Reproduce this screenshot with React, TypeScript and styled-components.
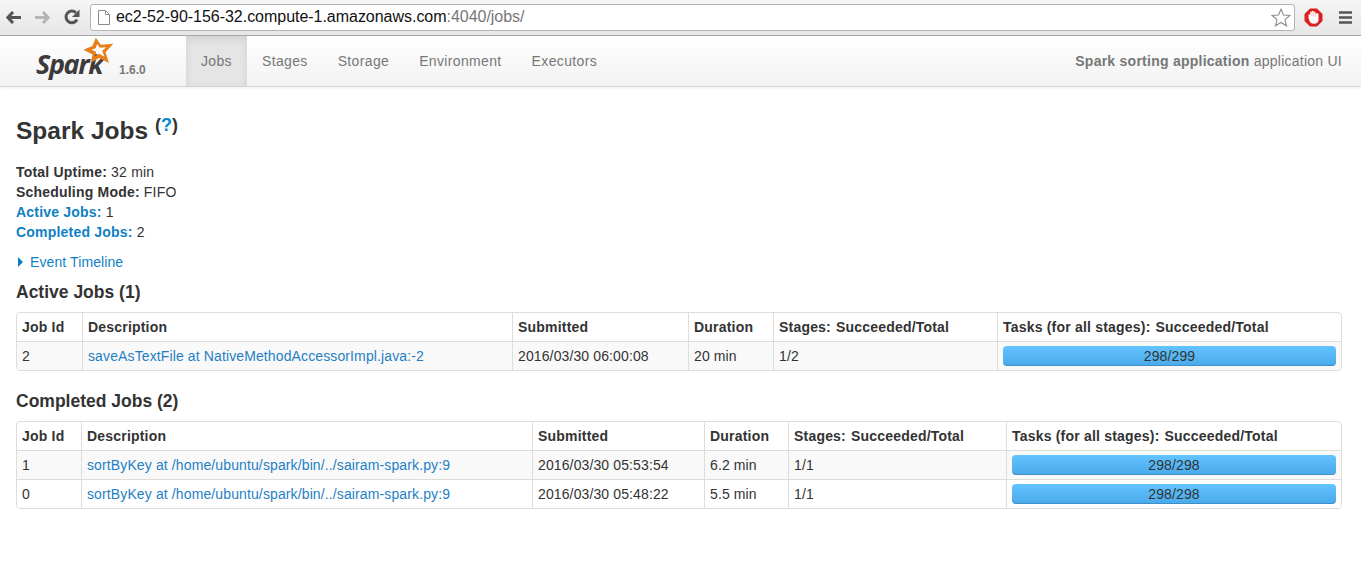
import React from "react";
import styled, { createGlobalStyle } from "styled-components";

const Global = createGlobalStyle`
  html, body { margin: 0; padding: 0; background: #fff; }
  body { font-family: "Liberation Sans", Arial, sans-serif; font-size: 14px; line-height: 20px; color: #333; overflow: hidden; }
  * { box-sizing: border-box; }
`;

const Page = styled.div`
  width: 1361px;
  height: 573px;
  display: flex;
  flex-direction: column;
`;

const BrowserBar = styled.div`
  height: 36px;
  flex: none;
  display: flex;
  align-items: center;
  background: linear-gradient(#f6f6f6, #e6e6e6);
  border-bottom: 1px solid #a9a9a9;
  padding: 0 6px 1px 6px;
`;

const NavIcon = styled.svg`
  flex: none;
  display: block;
`;

const ButtonSlot = styled.span<{ $w: number }>`
  width: ${(p) => p.$w}px;
  flex: none;
  display: flex;
`;

const Omnibox = styled.div`
  width: 1205px;
  height: 27px;
  flex: none;
  display: flex;
  align-items: center;
  background: #fff;
  border: 1px solid #b4b4b4;
  border-radius: 3px;
  padding: 0 0 0 7px;
  font-size: 16px;
  letter-spacing: -0.03px;
  color: #777;
  white-space: nowrap;
`;

const Host = styled.span`
  color: #111;
`;

const UrlText = styled.span`
  margin-left: 6px;
  flex: 1;
`;

const StarSlot = styled.span`
  margin-right: 3px;
  display: flex;
`;

const AdBlockSlot = styled.span`
  margin-left: 9px;
  display: flex;
`;

const MenuSlot = styled.span`
  margin-left: 16px;
  display: flex;
`;

const Navbar = styled.nav`
  height: 51px;
  flex: none;
  display: flex;
  background: linear-gradient(#ffffff, #f2f2f2);
  border-bottom: 1px solid #d4d4d4;
  box-shadow: 0 1px 3px rgba(0, 0, 0, 0.07);
  letter-spacing: 0.25px;
`;

const Brand = styled.div`
  width: 186px;
  flex: none;
  position: relative;
  letter-spacing: 0;
`;

const LogoWord = styled.span`
  position: absolute;
  left: 36px;
  top: 10px;
  font-family: "Open Sans", "Liberation Sans", sans-serif;
  font-style: italic;
  font-weight: 700;
  font-size: 27px;
  line-height: 36px;
  letter-spacing: -1.4px;
  color: #3c3a3a;
`;

const LogoStar = styled.svg`
  position: absolute;
  left: 83px;
  top: 1px;
`;

const Version = styled.span`
  position: absolute;
  left: 119px;
  top: 24px;
  font-size: 12px;
  font-weight: 700;
  line-height: 20px;
  color: #777;
`;

const NavTab = styled.a<{ $active?: boolean }>`
  display: block;
  padding: 15px 15px 0;
  font-size: 14px;
  line-height: 20px;
  letter-spacing: 0.35px;
  color: #777;
  background: ${(p) => (p.$active ? "#e5e5e5" : "transparent")};
  box-shadow: ${(p) => (p.$active ? "inset 0 3px 8px rgba(0,0,0,0.09)" : "none")};
`;

const NavRight = styled.div`
  margin-left: auto;
  padding: 15px 19px 0 0;
  color: #777;
  white-space: nowrap;
`;

const Content = styled.main`
  padding: 0 20px 0 16px;
`;

const Title = styled.h3`
  margin: 29px 0 0;
  font-size: 24.5px;
  font-weight: 700;
  line-height: 30px;
  color: #333;
`;

const Help = styled.sup`
  font-size: 18px;
  font-weight: 700;
  line-height: 0;
  position: relative;
  top: -8px;
  vertical-align: baseline;
`;

const HelpMark = styled.span`
  color: #0088cc;
`;

const Summary = styled.ul`
  list-style: none;
  margin: 16px 0 0;
  padding: 0;
  letter-spacing: 0.2px;
`;

const SummaryRow = styled.li``;

const Label = styled.strong<{ $link?: boolean }>`
  font-weight: 700;
  color: ${(p) => (p.$link ? "#0f7fc4" : "#333")};
`;

const Timeline = styled.div`
  margin-top: 10px;
  display: flex;
  align-items: center;
  color: #0f7fc4;
  letter-spacing: 0.1px;
`;

const Caret = styled.span`
  width: 0;
  height: 0;
  border-left: 5px solid #0f7fc4;
  border-top: 5px solid transparent;
  border-bottom: 5px solid transparent;
  margin: 0 7px 0 2px;
`;

const Heading = styled.h4<{ $top: number }>`
  margin: ${(p) => p.$top}px 0 10px;
  font-size: 17.5px;
  font-weight: 700;
  line-height: 20px;
  color: #333;
`;

const TableFrame = styled.div`
  border: 1px solid #ddd;
  border-radius: 4px;
  width: 1326px;
  overflow: hidden;
`;

const Table = styled.table`
  width: 100%;
  border-collapse: separate;
  border-spacing: 0;
  table-layout: fixed;
`;

const Th = styled.th`
  text-align: left;
  font-weight: 700;
  height: 28px;
  padding: 0 5px;
  border-left: 1px solid #ddd;
  white-space: nowrap;
  color: #333;
  letter-spacing: 0.2px;
  &:first-child { border-left: 0; }
`;

const Tr = styled.tr`
  background: #f9f9f9;
  &:nth-child(even) { background: #fff; }
`;

const Td = styled.td`
  height: 29px;
  padding: 0 5px;
  border-top: 1px solid #ddd;
  border-left: 1px solid #ddd;
  white-space: nowrap;
  color: #333;
  letter-spacing: 0.12px;
  &:first-child { border-left: 0; }
`;

const Link = styled.a`
  color: #1f7fc4;
`;

const ProgressBar = styled.div`
  height: 20px;
  border-radius: 4px;
  background: linear-gradient(#62c4ff, #4aa9ea);
  box-shadow: inset 0 -1px 0 rgba(0, 0, 0, 0.15);
  text-align: center;
  line-height: 20px;
  color: #333;
`;

const Gap = styled.span`
  margin-left: 5px;
`;

type Job = { id: string; desc: string; sub: string; dur: string; stages: string; tasks: string };

const JobTable = ({ widths, jobs }: { widths: number[]; jobs: Job[] }) => (
  <TableFrame>
    <Table>
      <colgroup>
        {widths.map((w, i) => (
          <col key={i} width={w} />
        ))}
      </colgroup>
      <thead>
        <tr>
          <Th>Job Id</Th>
          <Th>Description</Th>
          <Th>Submitted</Th>
          <Th>Duration</Th>
          <Th>
            Stages:<Gap>Succeeded/Total</Gap>
          </Th>
          <Th>
            Tasks (for all stages):<Gap>Succeeded/Total</Gap>
          </Th>
        </tr>
      </thead>
      <tbody>
        {jobs.map((j) => (
          <Tr key={j.id}>
            <Td>{j.id}</Td>
            <Td>
              <Link>{j.desc}</Link>
            </Td>
            <Td>{j.sub}</Td>
            <Td>{j.dur}</Td>
            <Td>{j.stages}</Td>
            <Td>
              <ProgressBar>{j.tasks}</ProgressBar>
            </Td>
          </Tr>
        ))}
      </tbody>
    </Table>
  </TableFrame>
);

export default function App() {
  return (
    <Page>
      <Global />
      <BrowserBar>
        <ButtonSlot $w={29}>
          <NavIcon width="15" height="13" viewBox="0 0 15 13">
            <path d="M7 1 L1.8 6.5 L7 12 M2 6.5 H15" fill="none" stroke="#555" strokeWidth="3" />
          </NavIcon>
        </ButtonSlot>
        <ButtonSlot $w={29}>
          <NavIcon width="15" height="13" viewBox="0 0 15 13">
            <path d="M8 1 L13.2 6.5 L8 12 M13 6.5 H0" fill="none" stroke="#b5b5b5" strokeWidth="3" />
          </NavIcon>
        </ButtonSlot>
        <ButtonSlot $w={26}>
          <NavIcon width="16" height="16" viewBox="0 0 16 16">
            <path d="M13 10.5 A5.8 5.8 0 1 1 12 3.8" fill="none" stroke="#555" strokeWidth="3" />
            <path d="M15.5 0.5 V8 H8 Z" fill="#555" />
          </NavIcon>
        </ButtonSlot>
        <Omnibox>
          <NavIcon width="12" height="15" viewBox="0 0 12 15">
            <path d="M.5.5 H7.5 L11.5 4.5 V14.5 H.5 Z M7.5.5 V4.5 H11.5" fill="#fff" stroke="#8a8a8a" />
          </NavIcon>
          <UrlText>
            <Host>ec2-52-90-156-32.compute-1.amazonaws.com</Host>:4040/jobs/
          </UrlText>
          <StarSlot>
            <NavIcon width="20" height="19" viewBox="0 0 20 19">
              <path
                d="M10 1.2 L12.5 7 L18.8 7.5 L14 11.6 L15.5 17.8 L10 14.5 L4.5 17.8 L6 11.6 L1.2 7.5 L7.5 7 Z"
                fill="#fff"
                stroke="#8c8c8c"
                strokeWidth="1.1"
              />
            </NavIcon>
          </StarSlot>
        </Omnibox>
        <AdBlockSlot>
          <NavIcon width="19" height="19" viewBox="0 0 19 19">
            <path d="M6 .5 H13 L18.5 6 V13 L13 18.5 H6 L.5 13 V6 Z" fill="#dc2020" />
            <path
              d="M4.5 6.5 H6.2 V3.8 H7.8 V3 H9.6 V3.8 H11.2 V5.2 H12.8 V5.6 H14.5 V11.5 C14.5 14 13 15.8 10 15.8 C7.5 15.8 6 14.5 5.3 12.5 L4.5 10 Z"
              fill="#fff"
            />
            <path d="M7.9 4 V8.5 M9.6 3.5 V8.5 M11.3 4.5 V8.5" stroke="#e8a0a0" strokeWidth="0.6" />
          </NavIcon>
        </AdBlockSlot>
        <MenuSlot>
          <NavIcon width="13" height="13" viewBox="0 0 13 13">
            <path d="M0 1.5 H13 M0 6.5 H13 M0 11.5 H13" stroke="#555" strokeWidth="2.6" />
          </NavIcon>
        </MenuSlot>
      </BrowserBar>
      <Navbar>
        <Brand>
          <LogoWord>Spark</LogoWord>
          <LogoStar width="31" height="27" viewBox="175 10 92 80">
            <path
              d="M213 12 L228 33 L265 30 L242 55 L252 87 L222 72 L198 87 L204 62 L176 48 L203 37 Z M217 31 L213 43 L200 48 L214 54 L211 68 L222 60 L238 68 L232 51 L244 40 L225 42 Z"
              fill="#e8801a"
              fillRule="evenodd"
            />
          </LogoStar>
          <Version>1.6.0</Version>
        </Brand>
        <NavTab $active>Jobs</NavTab>
        <NavTab>Stages</NavTab>
        <NavTab>Storage</NavTab>
        <NavTab>Environment</NavTab>
        <NavTab>Executors</NavTab>
        <NavRight>
          <strong>Spark sorting application</strong> application UI
        </NavRight>
      </Navbar>
      <Content>
        <Title>
          Spark Jobs{" "}
          <Help>
            (<HelpMark>?</HelpMark>)
          </Help>
        </Title>
        <Summary>
          <SummaryRow>
            <Label>Total Uptime:</Label> 32 min
          </SummaryRow>
          <SummaryRow>
            <Label>Scheduling Mode:</Label> FIFO
          </SummaryRow>
          <SummaryRow>
            <Label $link>Active Jobs:</Label> 1
          </SummaryRow>
          <SummaryRow>
            <Label $link>Completed Jobs:</Label> 2
          </SummaryRow>
        </Summary>
        <Timeline>
          <Caret />
          Event Timeline
        </Timeline>
        <Heading $top={10}>Active Jobs (1)</Heading>
        <JobTable
          widths={[65, 430, 176, 85, 224, 344]}
          jobs={[
            {
              id: "2",
              desc: "saveAsTextFile at NativeMethodAccessorImpl.java:-2",
              sub: "2016/03/30 06:00:08",
              dur: "20 min",
              stages: "1/2",
              tasks: "298/299",
            },
          ]}
        />
        <Heading $top={20}>Completed Jobs (2)</Heading>
        <JobTable
          widths={[64, 451, 172, 84, 218, 335]}
          jobs={[
            {
              id: "1",
              desc: "sortByKey at /home/ubuntu/spark/bin/../sairam-spark.py:9",
              sub: "2016/03/30 05:53:54",
              dur: "6.2 min",
              stages: "1/1",
              tasks: "298/298",
            },
            {
              id: "0",
              desc: "sortByKey at /home/ubuntu/spark/bin/../sairam-spark.py:9",
              sub: "2016/03/30 05:48:22",
              dur: "5.5 min",
              stages: "1/1",
              tasks: "298/298",
            },
          ]}
        />
      </Content>
    </Page>
  );
}
